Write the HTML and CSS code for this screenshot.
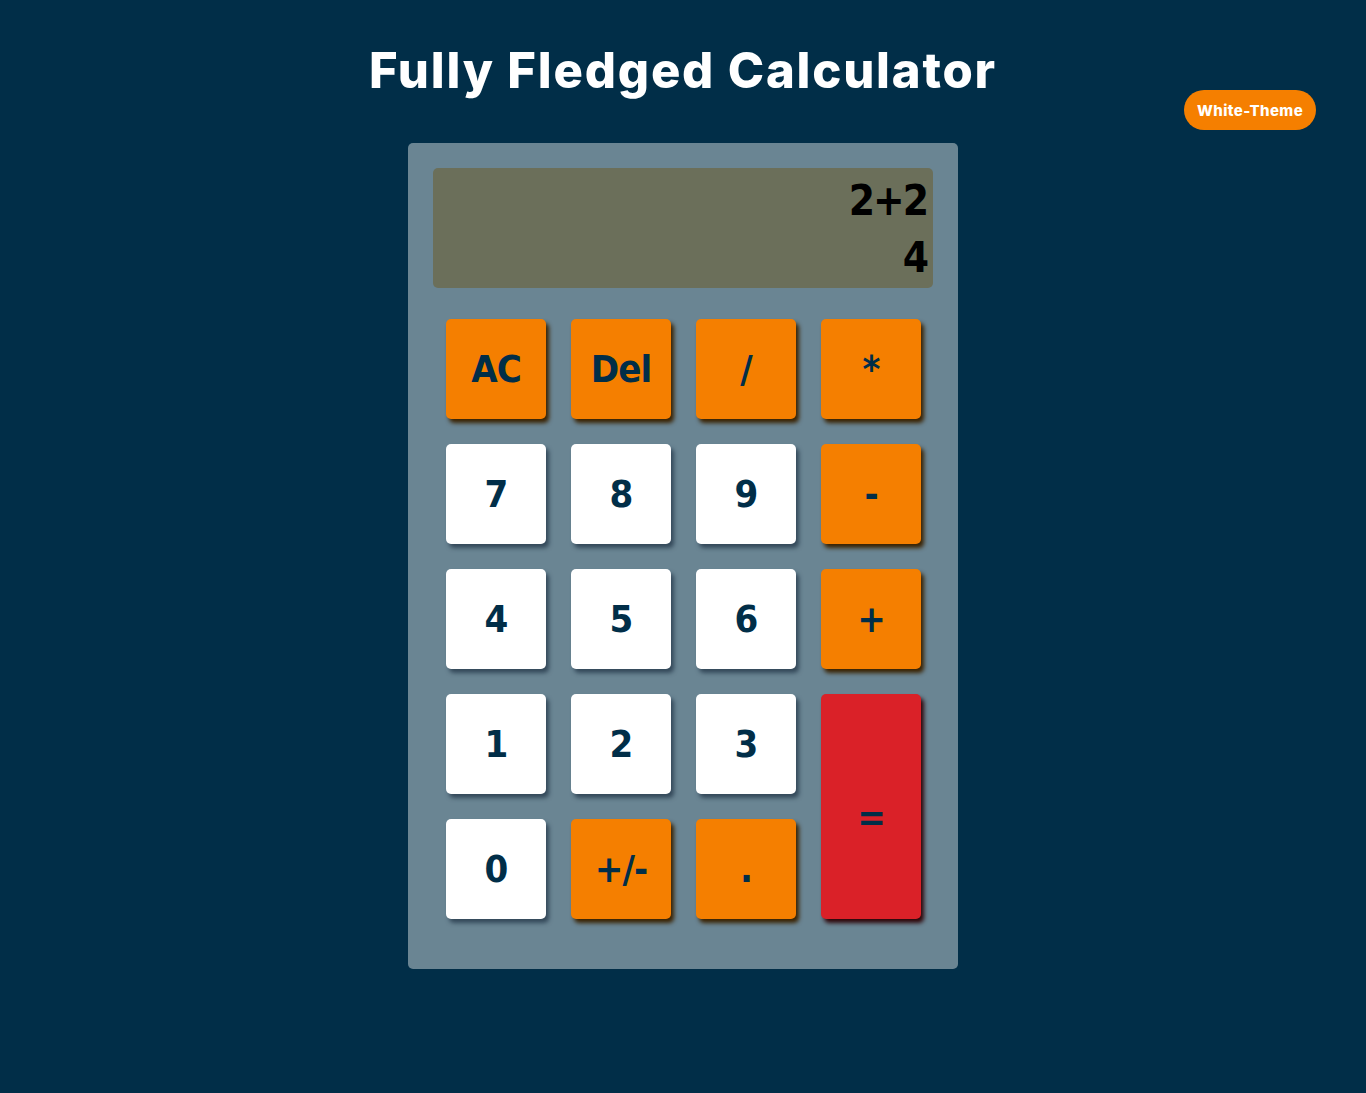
FILE: index.html
```html
<!DOCTYPE html>
<html lang="en">
<head>
<meta charset="utf-8">
<title>Fully Fledged Calculator</title>
<link rel="stylesheet" href="styles.css">
</head>
<body>
<header class="top">
  <h1 class="title">Fully Fledged Calculator</h1>
  <button class="theme-btn">White-Theme</button>
</header>
<main class="calc">
  <div class="display">
    <div class="expr">2+2</div>
    <div class="result">4</div>
  </div>
  <div class="keys">
    <button class="key op">AC</button>
    <button class="key op">Del</button>
    <button class="key op">/</button>
    <button class="key op star">*</button>
    <button class="key num">7</button>
    <button class="key num">8</button>
    <button class="key num">9</button>
    <button class="key op">-</button>
    <button class="key num">4</button>
    <button class="key num">5</button>
    <button class="key num">6</button>
    <button class="key op">+</button>
    <button class="key num">1</button>
    <button class="key num">2</button>
    <button class="key num">3</button>
    <button class="key eq">=</button>
    <button class="key num">0</button>
    <button class="key op">+/-</button>
    <button class="key op">.</button>
  </div>
</main>
</body>
</html>
```
FILE: styles.css
```css
* { box-sizing: border-box; }
html, body { margin: 0; padding: 0; }
body {
  background: #012e48;
  min-height: 1093px;
  font-family: "Inter", "Open Sans", sans-serif;
}
.top {
  position: relative;
  padding-top: 40px;
  height: 143px;
}
.title {
  margin: 0;
  text-align: center;
  color: #ffffff;
  font-family: "Inter", sans-serif;
  font-weight: 800;
  font-size: 49px;
  line-height: 62px;
  letter-spacing: 1.8px;
}
.theme-btn {
  position: absolute;
  top: 90px;
  right: 50px;
  width: 132px;
  height: 40px;
  border: none;
  border-radius: 20px;
  background: #f57f00;
  color: #ffffff;
  font-family: "Inter", sans-serif;
  font-weight: 800;
  font-size: 15px;
  letter-spacing: 0.4px;
  padding: 0;
}
.calc {
  width: 550px;
  margin: 0 auto;
  background: #6a8593;
  border-radius: 5px;
  padding: 25px;
  height: 826px;
}
.display {
  height: 120px;
  background: #6b6f5a;
  border-radius: 5px;
  padding: 4px 6px 0 0;
  text-align: right;
  color: #000000;
  font-family: "DejaVu Sans Condensed", "DejaVu Sans", sans-serif;
  font-stretch: condensed;
  font-weight: bold;
  font-size: 42px;
  line-height: 57px;
  letter-spacing: -2px;
}
.keys {
  display: grid;
  grid-template-columns: repeat(4, 100px);
  grid-auto-rows: 100px;
  gap: 25px;
  padding: 31px 0 0 13px;
}
.key {
  border: none;
  border-radius: 5px;
  padding: 0;
  color: #012e48;
  font-family: "DejaVu Sans Condensed", "DejaVu Sans", sans-serif;
  font-stretch: condensed;
  font-weight: bold;
  font-size: 38px;
  letter-spacing: -1px;
}
.num {
  background: #ffffff;
  box-shadow: 3px 4px 4px #34495a;
}
.op {
  background: #f57f00;
  box-shadow: 3px 4px 4px #3a2200;
}
.eq {
  grid-row: span 2;
  background: #da2128;
  box-shadow: 3px 4px 4px #2e0508;
  padding-top: 20px;
}
```
